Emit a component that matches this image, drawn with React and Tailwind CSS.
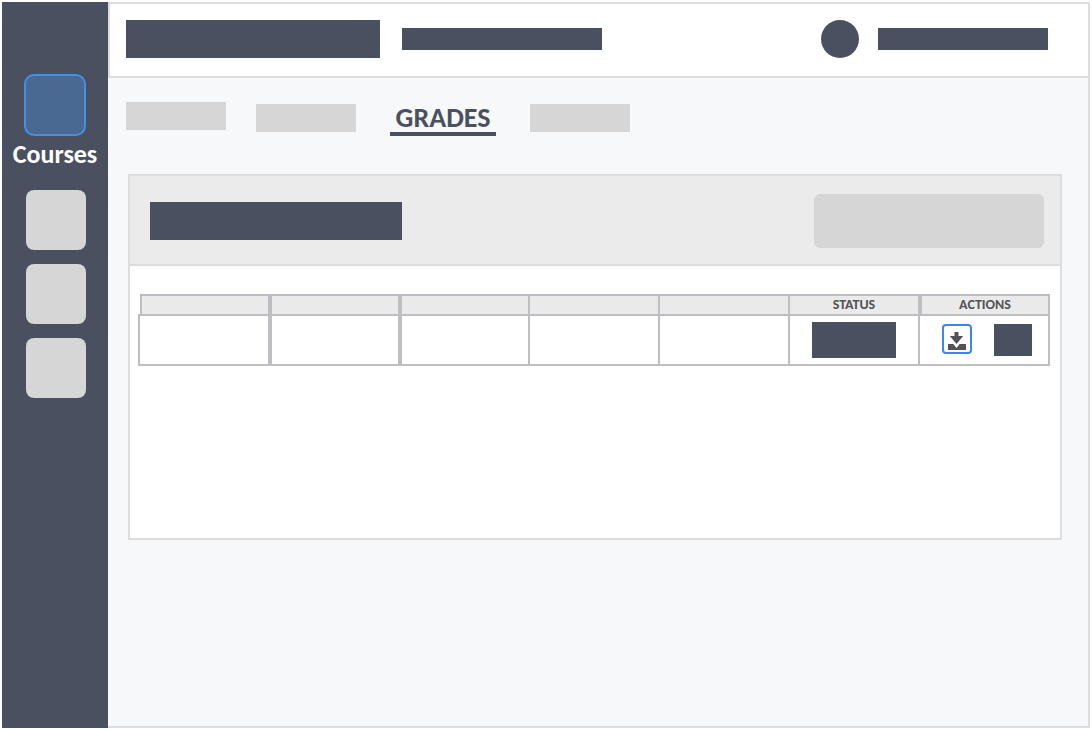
const dark = "bg-[#4b5060]";

function DownloadIcon() {
  return (
    <svg width="18" height="18" viewBox="0 0 18 18" fill="#525257" aria-hidden="true">
      <path d="M6.500 0h4v4h4.700L8.500 12 1.800 4h4.700z" />
      <path d="M0 12h5.300L8.500 15.900 11.700 12H18v6H0z" />
    </svg>
  );
}

function Sidebar() {
  return (
    <nav aria-label="Main" className={`w-[106px] shrink-0 pt-[72px] ${dark}`}>
      <a href="#courses" className="flex flex-col items-center">
        <span className="size-[62px] rounded-[10px] border-2 border-[#4190ea] bg-[#496993]" />
        <span className="mt-1 text-[26px] leading-7 font-bold text-white">Courses</span>
      </a>
      <ul className="mt-[22px] flex flex-col gap-3.5 pl-6">
        {["First", "Second", "Third"].map((name) => (
          <li key={name} className="h-[60px]">
            <a href={`#${name}`} aria-label={name} className="block size-[60px] rounded-lg bg-[#d6d6d6]" />
          </li>
        ))}
      </ul>
    </nav>
  );
}

function TopBar() {
  return (
    <header className="flex h-[76px] items-start border-2 border-r-0 border-[#dddddd] bg-white pt-4 pr-10 pl-4">
      <div className="flex h-[38px] grow items-center gap-[22px]">
        <div className={`h-[38px] w-[254px] ${dark}`} />
        <div className={`h-[22px] w-[200px] ${dark}`} />
      </div>
      <div className="flex h-[38px] items-center gap-[19px]">
        <div className={`size-[38px] rounded-full ${dark}`} />
        <div className={`h-[22px] w-[170px] ${dark}`} />
      </div>
    </header>
  );
}

function Tabs() {
  return (
    <nav aria-label="Course" className="flex h-[34px] items-start pl-[18px]">
      <a href="#one" aria-label="First tab" className="h-7 w-[100px] bg-[#d6d6d6]" />
      <a href="#two" aria-label="Second tab" className="mt-0.5 ml-[30px] h-7 w-[100px] bg-[#d6d6d6]" />
      <a
        href="#grades"
        aria-current="page"
        className="mx-[34px] flex h-[34px] w-[106px] items-end justify-center border-b-4 border-[#4b5060] text-[28px] leading-7 font-bold text-[#4b5060]"
      >
        GRADES
      </a>
      <a href="#four" aria-label="Fourth tab" className="mt-0.5 h-7 w-[100px] bg-[#d6d6d6]" />
    </nav>
  );
}

const line = "border-[#bebdc1]";

function GradesTable() {
  return (
    <table className="w-full table-fixed border-separate border-spacing-0">
      <colgroup>
        <col className="w-[132px]" />
        <col span={6} />
      </colgroup>
      <thead>
        <tr className="h-[22px] text-[14px] leading-[18px] font-bold text-[#525257]">
          <th className={`border-r-2 border-b-2 p-0 pl-0.5 ${line}`}>
            <div className={`h-5 border-t-2 border-l-2 bg-[#eaeaea] ${line}`} />
          </th>
          <th className={`border-2 bg-[#eaeaea] p-0 ${line}`} />
          <th className={`border-2 bg-[#eaeaea] p-0 ${line}`} />
          <th className={`border-2 border-l-0 bg-[#eaeaea] p-0 ${line}`} />
          <th className={`border-2 border-l-0 bg-[#eaeaea] p-0 ${line}`} />
          <th className={`border-2 border-l-0 bg-[#eaeaea] p-0 ${line}`}>STATUS</th>
          <th className={`border-2 bg-[#eaeaea] p-0 ${line}`}>ACTIONS</th>
        </tr>
      </thead>
      <tbody>
        <tr className="h-[50px]">
          <td className={`border-2 border-t-0 p-0 ${line}`} />
          <td className={`border-2 border-t-0 p-0 ${line}`} />
          <td className={`border-2 border-t-0 p-0 ${line}`} />
          <td className={`border-r-2 border-b-2 p-0 ${line}`} />
          <td className={`border-r-2 border-b-2 p-0 ${line}`} />
          <td className={`border-r-2 border-b-2 px-[22px] py-0 ${line}`}>
            <div className={`h-9 ${dark}`} />
          </td>
          <td className={`border-r-2 border-b-2 py-0 pr-4 pl-[22px] ${line}`}>
            <div className="flex h-8 items-start justify-between">
              <button
                type="button"
                aria-label="Download"
                className="flex size-[30px] items-end justify-center rounded-[4px] border-2 border-[#3f83f8] bg-white pb-0.5"
              >
                <DownloadIcon />
              </button>
              <div className={`h-8 w-[38px] ${dark}`} />
            </div>
          </td>
        </tr>
      </tbody>
    </table>
  );
}

export default function App() {
  return (
    <div className="flex min-h-screen bg-white p-0.5 font-[Carlito,'Noto_Sans','Open_Sans',sans-serif]">
      <Sidebar />
      <div className="flex min-w-0 grow flex-col border-r-2 border-[#dddddd] bg-[#f7f8fa]">
        <TopBar />
        <main className="grow border-b-2 border-[#dddddd] pt-6 pr-[26px]">
          <Tabs />
          <section className="mt-[38px] ml-5 border-2 border-[#dddddd] bg-white">
            <div className="flex h-[90px] items-center justify-between border-b-2 border-[#dddddd] bg-[#ebebeb] pt-0.5 pr-4 pl-5">
              <div className={`h-[38px] w-[252px] ${dark}`} />
              <button type="button" aria-label="Options" className="h-[54px] w-[230px] rounded-md bg-[#d6d6d6]" />
            </div>
            <div className="min-h-[272px] pt-7 pr-2.5 pl-2">
              <GradesTable />
            </div>
          </section>
        </main>
      </div>
    </div>
  );
}
